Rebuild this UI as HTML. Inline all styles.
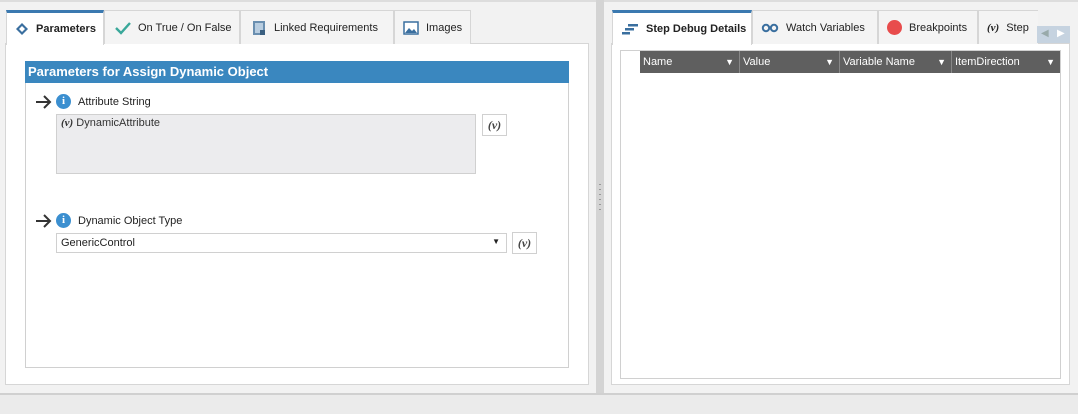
<!DOCTYPE html>
<html><head><style>
*{box-sizing:border-box;margin:0;padding:0}
body{width:1078px;height:414px;background:#f2f2f2;font-family:"Liberation Sans",sans-serif;font-size:11px;color:#222;position:relative;overflow:hidden}
.a{position:absolute}
.tab{position:absolute;top:10px;height:34px;border:1px solid #d6d6d6;border-bottom:none;background:#f4f4f4;display:flex;align-items:center;padding-left:8px;gap:7px;font-size:11px}
.tab.sel{background:#fff;border-top:3px solid #3b79b0;font-weight:bold;height:35px}
.vbtn{position:absolute;width:25px;height:22px;border:1px solid #d0d0d0;background:#fff;font-family:"Liberation Serif",serif;font-weight:bold;font-style:italic;font-size:12px;text-align:center;line-height:20px;color:#444}
.info{display:inline-block;width:15px;height:15px;border-radius:50%;background:#3b8fd0;color:#fff;font-weight:bold;font-size:11px;text-align:center;line-height:15px;font-family:"Liberation Serif",serif}
.th{position:absolute;top:0;height:22px;color:#fff;font-size:11px;line-height:22px;padding-left:3px;border-right:1px solid #888}
.th span{position:absolute;right:5px;top:0;font-size:9px}
</style></head><body>
<div class="a" style="left:0;top:0;width:1078px;height:2px;background:#ddd"></div>
<div class="a" style="left:5px;top:43px;width:584px;height:342px;background:#fff;border:1px solid #d6d6d6"></div>
<div class="tab sel" style="left:6px;width:98px"><svg width="14" height="14" viewBox="0 0 14 14"><path d="M7 1L13 7L7 13L1 7Z" fill="#3a6f9f"/><path d="M7 4L10 7L7 10L4 7Z" fill="#fff"/></svg>Parameters</div>
<div class="tab" style="left:104px;width:136px;padding-left:10px"><svg width="16" height="14"><path d="M1 7L6 12L15 2" stroke="#3aa89a" stroke-width="2.4" fill="none"/></svg>On True / On False</div>
<div class="tab" style="left:240px;width:154px;padding-left:10px"><svg width="16" height="16"><rect x="2" y="1" width="12" height="14" fill="#6a8fb0"/><rect x="4" y="3" width="8" height="10" fill="#b8cde0"/><rect x="9" y="10" width="5" height="5" fill="#3a5f80"/></svg>Linked Requirements</div>
<div class="tab" style="left:394px;width:77px"><svg width="16" height="14"><rect x="1" y="1" width="14" height="12" fill="#fff" stroke="#3a6f9f" stroke-width="1.5"/><path d="M2 12L6 7L9 10L11 8L14 12Z" fill="#3a6f9f"/></svg>Images</div>
<div class="a" style="left:25px;top:61px;width:544px;height:307px;border:1px solid #d0d0d0;background:#fff"></div>
<div class="a" style="left:25px;top:61px;width:544px;height:22px;background:#3a87bf;color:#fff;font-weight:bold;font-size:13px;line-height:21px;padding-left:3px">Parameters for Assign Dynamic Object</div>
<svg class="a" style="left:35px;top:95px" width="18" height="14"><path d="M1 7H15M9 1L15 7L9 13" stroke="#333" stroke-width="2" fill="none"/></svg>
<div class="a" style="left:56px;top:94px"><span class="info">i</span></div>
<div class="a" style="left:78px;top:96px">Attribute String</div>
<div class="a" style="left:56px;top:114px;width:420px;height:60px;background:#ececee;border:1px solid #d0d0d0;padding:2px 4px;color:#333"><i style="font-family:'Liberation Serif',serif;font-weight:bold">(v)</i> DynamicAttribute</div>
<div class="vbtn" style="left:482px;top:114px">(v)</div>
<svg class="a" style="left:35px;top:214px" width="18" height="14"><path d="M1 7H15M9 1L15 7L9 13" stroke="#333" stroke-width="2" fill="none"/></svg>
<div class="a" style="left:56px;top:213px"><span class="info">i</span></div>
<div class="a" style="left:78px;top:215px">Dynamic Object Type</div>
<div class="a" style="left:56px;top:233px;width:451px;height:20px;border:1px solid #d0d0d0;background:#fff;padding:3px 4px">GenericControl<span style="position:absolute;right:6px;top:3px;font-size:8px">&#9660;</span></div>
<div class="vbtn" style="left:512px;top:232px">(v)</div>
<div class="a" style="left:596px;top:0;width:8px;height:393px;background:#d4d4d4"></div>
<div class="a" style="left:599px;top:184px;width:2px;height:26px;background:repeating-linear-gradient(#999 0 1px,transparent 1px 5px)"></div>
<div class="a" style="left:611px;top:43px;width:459px;height:342px;background:#fff;border:1px solid #d6d6d6"></div>
<div class="tab sel" style="left:612px;width:140px"><svg width="18" height="12"><rect x="7" y="1" width="10" height="2.5" fill="#3a6f9f"/><rect x="4" y="5" width="9" height="2.5" fill="#3a6f9f"/><rect x="1" y="9" width="8" height="2.5" fill="#3a6f9f"/></svg>Step Debug Details</div>
<div class="tab" style="left:752px;width:126px"><svg width="18" height="10"><circle cx="5" cy="5" r="3.2" fill="none" stroke="#3a6f9f" stroke-width="2"/><circle cx="13" cy="5" r="3.2" fill="none" stroke="#3a6f9f" stroke-width="2"/></svg>Watch Variables</div>
<div class="tab" style="left:878px;width:100px"><span style="display:inline-block;width:15px;height:15px;border-radius:50%;background:#e84c4c"></span>Breakpoints</div>
<div class="tab" style="left:978px;width:60px;border-right:none"><i style="font-family:'Liberation Serif',serif;font-weight:bold">(v)</i>Step</div>
<div class="a" style="left:1037px;top:26px;width:33px;height:17px;background:#c6d3e0"></div>
<div class="a" style="left:1041px;top:28px;color:#9aa;font-size:10px">&#9664;</div>
<div class="a" style="left:1057px;top:28px;color:#fff;font-size:10px">&#9654;</div>
<div class="a" style="left:620px;top:50px;width:441px;height:329px;border:1px solid #d0d0d0;background:#fff"></div>
<div class="a" style="left:640px;top:51px;width:420px;height:22px;background:#5f5f5f">
<div class="th" style="left:0;width:100px">Name<span>&#9660;</span></div>
<div class="th" style="left:100px;width:100px">Value<span>&#9660;</span></div>
<div class="th" style="left:200px;width:112px">Variable Name<span>&#9660;</span></div>
<div class="th" style="left:312px;width:108px;border-right:none">ItemDirection<span>&#9660;</span></div>
</div>
<div class="a" style="left:0;top:393px;width:1078px;height:21px;background:#ebebeb;border-top:2px solid #d0d0d0"></div>
</body></html>
